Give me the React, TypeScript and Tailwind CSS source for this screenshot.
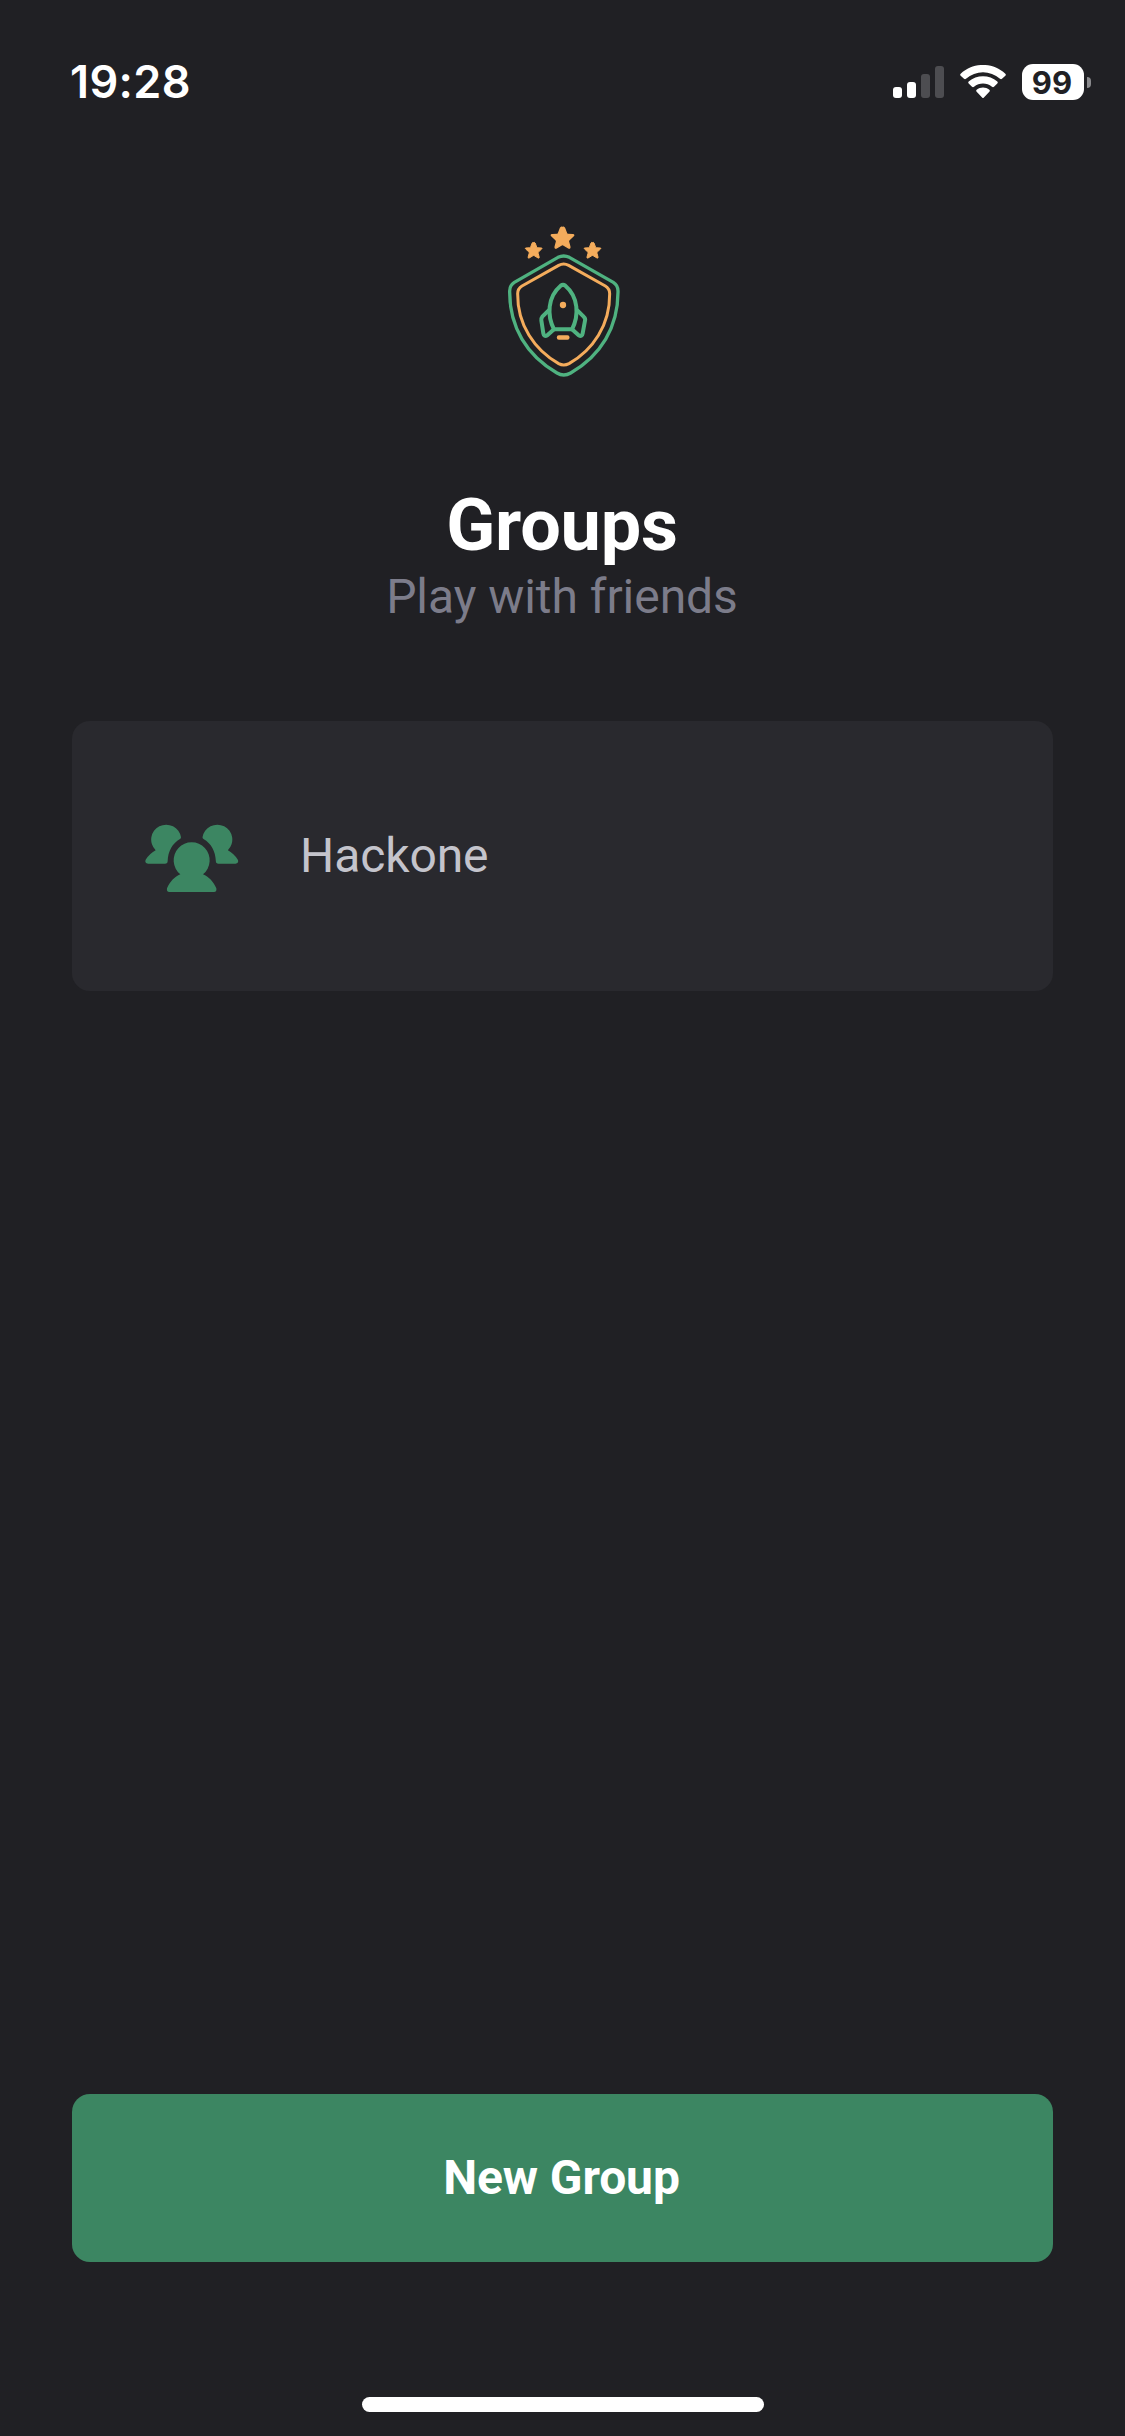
import React from 'react';

function SignalIcon() {
  return (
    <div className="flex h-8 items-end gap-[5px]">
      <span className="h-[11px] w-[9px] rounded-[3px] bg-white" />
      <span className="h-4 w-[9px] rounded-[3px] bg-white" />
      <span className="h-6 w-[9px] rounded-[3px] bg-[#4d4d51]" />
      <span className="h-8 w-[9px] rounded-[3px] bg-[#4d4d51]" />
    </div>
  );
}

function WifiIcon() {
  return (
    <svg className="mb-px ml-4 h-[33px] w-[46px]" viewBox="270 75 138 99" fill="#fff">
      <path d="M272 101C310 66 368 66 406 101Q409 104 406 107L396 116.500Q393 119 390 116.500C361 90.500 317 90.500 288 116.500Q285 119 282 116.500L272 107Q269 104 272 101Z" />
      <path d="M296 124.500C320 103 358 103 382 124.500Q385 127.500 382 130.500L372 140.500Q369 143 366 140.500C350 127.500 328 127.500 312 140.500Q309 143 306 140.500L296 130.500Q293 127.500 296 124.500Z" />
      <path d="M320 149C331 140.500 347 140.500 358 149Q361 152 358 155L341 173Q339 175 337 173L320 155Q317 152 320 149Z" />
    </svg>
  );
}

function Battery() {
  return (
    <div className="ml-4 flex items-center gap-[3px]">
      <div className="flex h-9 w-[62px] items-center justify-center rounded-[11px] bg-white pt-px pr-0.5 font-['Inter'] text-[31px] leading-9 font-bold text-[#202024]">
        99
      </div>
      <span className="h-[11px] w-1 rounded-r-full bg-[#8a8a8d]" />
    </div>
  );
}

function StatusBar() {
  return (
    <header className="flex h-[164px] shrink-0 items-center justify-between pr-[34px] pl-[70px]">
      <time className="font-['Inter'] text-[45px] leading-[54px] font-semibold tracking-[0.4px] text-white">
        19:28
      </time>
      <div className="flex items-center">
        <SignalIcon />
        <WifiIcon />
        <Battery />
      </div>
    </header>
  );
}

const STAR =
  'M0 -33Q3 -37 6 -32L12 -16Q13 -13 16 -13L31 -12Q36 -11 32 -8L20 3Q17 6 18 9L22 24Q23 30 18 28L3 19Q0 17 -3 19L-18 28Q-23 30 -22 24L-18 9Q-17 6 -20 3L-32 -8Q-36 -11 -31 -12L-16 -13Q-13 -13 -12 -16L-6 -32Q-3 -37 0 -33Z';

function Logo() {
  return (
    <svg
      className="mt-[51px] ml-[490px] h-[175px] w-[150px] shrink-0"
      viewBox="0 0 450 525"
      fill="none"
      strokeLinecap="round"
      strokeLinejoin="round"
    >
      <g fill="#f4ac5c">
        <g stroke="#f4ac5c" strokeWidth="4">
          <path transform="translate(217.500 71)" d={STAR} />
          <path transform="translate(131 108) scale(.75)" d={STAR} />
          <path transform="translate(307.500 108) scale(.75)" d={STAR} />
        </g>
        <circle cx="219" cy="270" r="9.500" />
        <rect x="200.500" y="360.500" width="38" height="14" rx="6" />
      </g>
      <path
        stroke="#f4ac5c"
        strokeWidth="9"
        d="M206 151Q221 143 236 151L346 213Q359 221 359 236C360 330 309 405 237 446Q221 454 206 446C134 405 82 330 83 236Q83 221 96 213Z"
      />
      <g stroke="#4fb280">
        <path
          strokeWidth="10"
          d="M204 127Q221 119 238 127L370 202Q384 211 384 228C385 337 332 422 242 474Q221 486 201 474C111 422 58 337 59 228Q59 211 73 202Z"
        />
        <path strokeWidth="12" d="M192 343C171 302 172 246 212 212Q219 207 226 212C266 246 267 302 246 343Z" />
        <path
          strokeWidth="12"
          d="M176 286L157 305Q153 310 154 316L160 355Q162 367 172 361L192 343M262 286L281 305Q287 310 285 317L278 355Q276 367 266 361L246 343"
        />
      </g>
    </svg>
  );
}

function PeopleIcon() {
  return (
    <svg className="mt-[3px] h-[68px] w-[94px]" viewBox="256 342 282 204" fill="#3c8662">
      <path d="M288 421A45 45 0 1 1 364 382Q364 385 361 387C338 400 325 424 324 453Q324 461 316 461H265Q254 460 258 449Q271 430 288 421Z" />
      <path
        transform="translate(792.500 0) scale(-1 1)"
        d="M288 421A45 45 0 1 1 364 382Q364 385 361 387C338 400 325 424 324 453Q324 461 316 461H265Q254 460 258 449Q271 430 288 421Z"
      />
      <path d="M362 493A54 54 0 1 1 430 493C447 500 461 515 470 535Q472 546 463 546H329Q320 546 322 535C331 515 345 500 362 493Z" />
    </svg>
  );
}

export default function App() {
  return (
    <div className="flex h-[2436px] w-[1125px] flex-col bg-[#202024] font-['Roboto',sans-serif]">
      <StatusBar />
      <Logo />
      <section className="mt-[93px] pr-px text-center">
        <h1 className="text-[72px] leading-[86px] font-bold tracking-[-0.2px] text-white">Groups</h1>
        <p className="text-[48px] leading-[56px] tracking-[-0.05px] text-[#7c7c8a]">Play with friends</p>
      </section>
      <button className="mx-[72px] mt-[96px] flex h-[270px] shrink-0 items-center rounded-[18px] bg-[#29292e] pl-[73px] text-left">
        <PeopleIcon />
        <span className="ml-[61px] text-[48px] leading-[56px] tracking-[-0.1px] text-[#c4c4cc]">Hackone</span>
      </button>
      <button className="mx-[72px] mt-auto h-[168px] shrink-0 rounded-[18px] bg-[#3c8662] pr-0.5 text-[48px] font-bold tracking-[-0.1px] text-white">
        New Group
      </button>
      <div className="mt-[135px] mb-6 ml-[362px] h-[15px] w-[402px] shrink-0 rounded-full bg-white" />
    </div>
  );
}
